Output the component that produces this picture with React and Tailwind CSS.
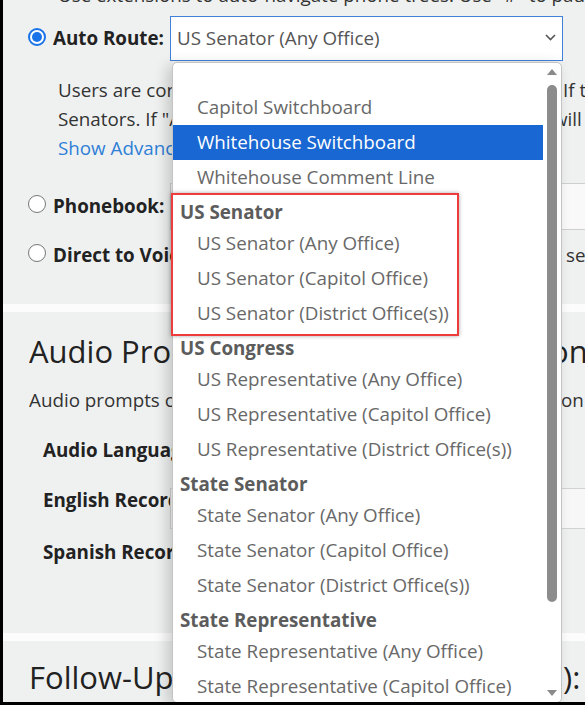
import React from "react";

const groups = [
  { items: ["Capitol Switchboard", "Whitehouse Switchboard", "Whitehouse Comment Line"] },
  { label: "US Senator", items: ["US Senator (Any Office)", "US Senator (Capitol Office)", "US Senator (District Office(s))"] },
  { label: "US Congress", items: ["US Representative (Any Office)", "US Representative (Capitol Office)", "US Representative (District Office(s))"] },
  { label: "State Senator", items: ["State Senator (Any Office)", "State Senator (Capitol Office)", "State Senator (District Office(s))"] },
  { label: "State Representative", items: ["State Representative (Any Office)", "State Representative (Capitol Office)", "State Representative (District Office(s))"] },
];

function RadioOn() {
  return (
    <span className="w-[18px] h-[18px] rounded-full border-2 border-[#1a73e8] bg-white flex items-center justify-center shrink-0 mb-[4px]">
      <span className="w-[10px] h-[10px] rounded-full bg-[#1a73e8]" />
    </span>
  );
}

function RadioOff({ className = "" }) {
  return <span className={"w-[18px] h-[18px] rounded-full border-[1.5px] border-[#767676] bg-white shrink-0 " + className} />;
}

function Dropdown() {
  return (
    <div className="absolute left-[1px] top-[45px] w-[390px] h-[641px] bg-white border border-[#c4c4c4] rounded-[5px] shadow-[-5px_3px_14px_rgba(0,0,0,0.18)] z-10 flex">
      <div className="w-[370px] flex flex-col">
        <div className="h-[27px] shrink-0" />
        {groups.map((g, gi) => (
          <React.Fragment key={gi}>
            {g.label && (
              <div className="h-[31px] shrink-0 pt-[5px] leading-[24px] pl-[7px] text-[18.8px] font-bold text-[#5c5c5c] whitespace-nowrap">
                {g.label}
              </div>
            )}
            {g.items.map((it) => (
              <div
                key={it}
                className={
                  it === "Whitehouse Switchboard"
                    ? "h-[35px] shrink-0 flex items-center pl-[24px] text-[18.8px] whitespace-nowrap bg-[#1967d2] text-white"
                    : "h-[35px] shrink-0 flex items-center pl-[24px] text-[18.8px] whitespace-nowrap text-[#686868]"
                }
              >
                {it}
              </div>
            ))}
          </React.Fragment>
        ))}
      </div>
      <div className="w-[18px] flex flex-col items-center pt-[6px] pb-[6px]">
        <svg width="10" height="6" viewBox="0 0 10 6" className="shrink-0">
          <path d="M5 0 L10 6 L0 6 Z" fill="#8a8a8a" />
        </svg>
        <div className="mt-[10px] w-[10px] h-[517px] rounded-full bg-[#8c8c8c] shrink-0" />
        <div className="flex-1" />
        <svg width="10" height="6" viewBox="0 0 10 6" className="shrink-0">
          <path d="M0 0 L10 0 L5 6 Z" fill="#8a8a8a" />
        </svg>
      </div>
      <div className="absolute left-[-2px] top-[130px] w-[288px] h-[143px] border-2 border-[#ee3b3b] shadow-[0_0_4px_rgba(0,0,0,0.35)] pointer-events-none" />
    </div>
  );
}

export default function App() {
  return (
    <div className="w-[585px] h-[709px] bg-white font-['Open_Sans','Noto_Sans',sans-serif] overflow-hidden">
      <div className="h-[705px] border-l-[3px] border-b-[3px] border-black overflow-hidden bg-[#eff1f1]">
        <div className="w-[900px] flex flex-col h-full">
          {/* Panel 1 */}
          <div className="flex flex-col h-[304px] shrink-0">
            <div className="mt-[-19px] h-[28px] leading-[28px] pl-[55px] text-[18.8px] text-[#333] whitespace-nowrap">
              Use extensions to auto-navigate phone trees. Use "#" to pause, e.g. 1#2.
            </div>
            <div className="mt-[7px] h-[45px] flex items-center pl-[25px] shrink-0">
              <RadioOn />
              <span className="ml-[7px] w-[117px] shrink-0 font-bold text-[18.8px] text-[#222] whitespace-nowrap">Auto Route:</span>
              <div className="relative w-[393px] h-[45px] shrink-0 bg-white border border-[#3f80d8] flex items-center justify-between pl-[6px] pr-[6px]">
                <span className="text-[18.8px] text-[#555] whitespace-nowrap">US Senator (Any Office)</span>
                <svg width="11" height="7" viewBox="0 0 11 7" className="mb-[3px]">
                  <path d="M1 1 L5.5 5.5 L10 1" fill="none" stroke="#555" strokeWidth="1.6" />
                </svg>
                <Dropdown />
              </div>
            </div>
            <div className="mt-[14.5px] pl-[55px] text-[18.8px] leading-[29px] text-[#333] flex flex-col">
              <div className="flex whitespace-nowrap">
                <span className="w-[505px] overflow-hidden shrink-0">Users are connected to the selected official's</span>
                <span>If the caller's address cannot be matched,</span>
              </div>
              <div className="flex whitespace-nowrap">
                <span className="w-[495px] overflow-hidden shrink-0">Senators. If "Any Office" is chosen, the first</span>
                <span>will be used.</span>
              </div>
              <div className="text-[#2f7fd6] whitespace-nowrap">Show Advanced Options</div>
            </div>
            <div className="mt-[20.5px] h-[47px] flex items-center pl-[25px] shrink-0">
              <RadioOff className="mb-[6px]" />
              <span className="ml-[7px] w-[117px] shrink-0 font-bold text-[18.8px] text-[#222] whitespace-nowrap">Phonebook:</span>
              <div className="w-[500px] h-[47px] shrink-0 bg-[#f9f9f9] border border-[#cfcfcf]" />
            </div>
            <div className="h-[50px] flex items-center pl-[25px] shrink-0">
              <RadioOff className="mb-[5px]" />
              <span className="ml-[7px] w-[513px] shrink-0 overflow-hidden whitespace-nowrap text-[18.8px] text-[#333]">
                <span className="font-bold text-[#222]">Direct to Voicemail:</span> Callers reach the voicemail
              </span>
              <span className="text-[18.8px] text-[#333] whitespace-nowrap">selected office.</span>
            </div>
          </div>

          <div className="h-[8px] bg-[#fcfcfc] shrink-0" />

          {/* Panel 2 */}
          <div className="flex flex-col h-[321px] shrink-0">
            <div className="mt-[19px] h-[40px] leading-[40px] pl-[26px] text-[31px] text-[#222] flex whitespace-nowrap">
              <span className="w-[521px] overflow-hidden shrink-0">Audio Prompts &amp; Recordings</span>
              <span>on</span>
            </div>
            <div className="mt-[14.5px] h-[28px] leading-[28px] pl-[26px] text-[18.8px] text-[#333] flex whitespace-nowrap">
              <span className="w-[532px] overflow-hidden shrink-0">Audio prompts can be customized for each</span>
              <span>on below.</span>
            </div>
            <div className="mt-[22px] h-[28px] leading-[28px] pl-[40px] text-[18.8px] font-bold text-[#222] whitespace-nowrap">
              Audio Language:
            </div>
            <div className="mt-[22.5px] flex items-start pl-[40px] shrink-0">
              <span className="w-[127px] h-[28px] leading-[28px] shrink-0 text-[18.8px] font-bold text-[#222] whitespace-nowrap">English Recording:</span>
              <div className="mt-[2px] w-[500px] h-[41px] shrink-0 bg-[#f7f7f7] border border-[#d2d2d2]" />
            </div>
            <div className="mt-[8.7px] h-[28px] leading-[28px] pl-[40px] text-[18.8px] font-bold text-[#222] whitespace-nowrap">
              Spanish Recording:
            </div>
          </div>

          <div className="h-[8px] bg-[#fcfcfc] shrink-0" />

          {/* Panel 3 */}
          <div className="flex flex-col flex-1">
            <div className="mt-[15.6px] h-[40px] leading-[40px] pl-[26px] text-[31px] text-[#222] flex whitespace-nowrap">
              <span className="w-[534px] overflow-hidden shrink-0">Follow-Up Message (optional</span>
              <span>):</span>
            </div>
          </div>
        </div>
      </div>
    </div>
  );
}
